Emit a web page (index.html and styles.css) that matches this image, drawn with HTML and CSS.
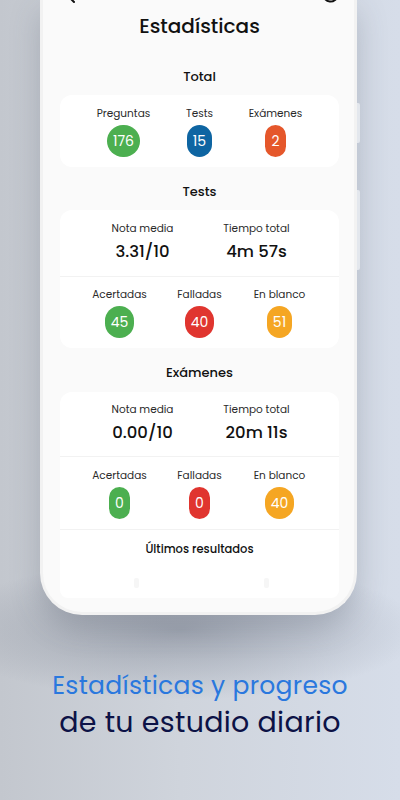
FILE: index.html
```html
<!DOCTYPE html>
<html lang="es">
<head>
  <meta charset="utf-8">
  <title>Estadísticas</title>
  <link rel="stylesheet" href="styles.css">
</head>
<body>
  <div class="stage">
    <div class="phone">
      <div class="side-btn side-btn-top"></div>
      <div class="side-btn side-btn-mid"></div>

      <div class="toolbar">
        <svg class="tool-icon" width="18" height="18" viewBox="0 0 18 18">
          <path d="M11 2 L4 9 L11 16" fill="none" stroke="#111" stroke-width="2" stroke-linecap="round"/>
        </svg>
        <svg class="tool-icon" width="18" height="18" viewBox="0 0 18 18">
          <path d="M15 4 A6.5 6.5 0 1 1 4 13" fill="none" stroke="#111" stroke-width="2" stroke-linecap="round"/>
        </svg>
      </div>

      <h1 class="title">Estadísticas</h1>

      <!-- Total -->
      <h2 class="section-title">Total</h2>
      <div class="card">
        <div class="row row-total">
          <div class="stat">
            <span class="stat-label">Preguntas</span>
            <span class="badge green">176</span>
          </div>
          <div class="stat">
            <span class="stat-label">Tests</span>
            <span class="badge blue">15</span>
          </div>
          <div class="stat">
            <span class="stat-label">Exámenes</span>
            <span class="badge orange">2</span>
          </div>
        </div>
      </div>

      <!-- Tests -->
      <h2 class="section-title">Tests</h2>
      <div class="card">
        <div class="row row-summary">
          <div class="stat">
            <span class="stat-label">Nota media</span>
            <span class="stat-value">3.31/10</span>
          </div>
          <div class="stat">
            <span class="stat-label">Tiempo total</span>
            <span class="stat-value">4m 57s</span>
          </div>
        </div>
        <div class="divider"></div>
        <div class="row row-answers">
          <div class="stat">
            <span class="stat-label">Acertadas</span>
            <span class="badge green">45</span>
          </div>
          <div class="stat">
            <span class="stat-label">Falladas</span>
            <span class="badge red">40</span>
          </div>
          <div class="stat">
            <span class="stat-label">En blanco</span>
            <span class="badge yellow">51</span>
          </div>
        </div>
      </div>

      <!-- Exámenes -->
      <h2 class="section-title section-title-exams">Exámenes</h2>
      <div class="card card-exams">
        <div class="row row-summary">
          <div class="stat">
            <span class="stat-label">Nota media</span>
            <span class="stat-value">0.00/10</span>
          </div>
          <div class="stat">
            <span class="stat-label">Tiempo total</span>
            <span class="stat-value">20m 11s</span>
          </div>
        </div>
        <div class="divider"></div>
        <div class="row row-answers">
          <div class="stat">
            <span class="stat-label">Acertadas</span>
            <span class="badge green">0</span>
          </div>
          <div class="stat">
            <span class="stat-label">Falladas</span>
            <span class="badge red">0</span>
          </div>
          <div class="stat">
            <span class="stat-label">En blanco</span>
            <span class="badge yellow">40</span>
          </div>
        </div>
        <div class="divider"></div>
        <div class="latest">Últimos resultados</div>
        <div class="chart-stubs">
          <span class="stub"></span>
          <span class="stub"></span>
        </div>
      </div>
    </div>

    <div class="caption">
      <p class="caption-blue">Estadísticas y progreso</p>
      <p class="caption-dark">de tu estudio diario</p>
    </div>
  </div>
</body>
</html>
```

FILE: styles.css
```css
/* Reset */
html, body {
  margin: 0;
  padding: 0;
}

body {
  width: 400px;
  height: 800px;
  overflow: hidden;
  font-family: "Poppins", Inter, "Open Sans", sans-serif;
  color: #111;
  background:
    radial-gradient(ellipse 240px 70px at 180px 630px, rgba(90, 98, 115, 0.4), rgba(90, 98, 115, 0) 100%),
    linear-gradient(90deg, #c3c7ce 0%, #cfd4dc 45%, #d6dde9 100%);
}

.stage {
  padding: 0 43px 0 40px;
}

/* Phone frame */
.phone {
  display: flow-root;
  position: relative;
  height: 612px;
  background-color: #fafafa;
  border: 3px solid #f2f2f2;
  border-top: none;
  border-radius: 0 0 42px 42px;
  padding: 0 15px 0 17px;
  box-shadow: 0 12px 30px rgba(70, 78, 95, 0.25);
}

.side-btn {
  position: absolute;
  right: -6px;
  width: 3px;
  background-color: #e3e7ed;
  border-radius: 0 2px 2px 0;
}

.side-btn-top {
  top: 103px;
  height: 40px;
}

.side-btn-mid {
  top: 190px;
  height: 80px;
}

.toolbar {
  display: flex;
  justify-content: space-between;
  margin-top: -14px;
  height: 18px;
  padding: 0 0 0 3px;
}

.title {
  margin: 7px 0 0;
  font-size: 20px;
  line-height: 30px;
  font-weight: 500;
  text-align: center;
}

.section-title {
  margin: 26px 0 8px;
  font-size: 13px;
  line-height: 20px;
  font-weight: 500;
  text-align: center;
}

.card + .section-title {
  margin-top: 15px;
}

.section-title-exams {
  margin-bottom: 9px;
}

/* Cards */
.card {
  background-color: #fff;
  border-radius: 12px;
}

.card-exams {
  height: 206px;
  border-radius: 12px 12px 8px 8px;
}

.row {
  display: grid;
  justify-content: center;
}

.row-total {
  grid-template-columns: repeat(3, 76px);
  padding: 12px 0 10px;
}

.row-summary {
  grid-template-columns: repeat(2, 114px);
  padding: 12px 0 12px;
}

.card-exams .row-summary {
  padding: 11px 0 11px;
}

.row-answers {
  grid-template-columns: repeat(3, 80px);
  padding: 11px 0 10px;
}

.card-exams .row-answers {
  padding-top: 12px;
}

.stat {
  display: flex;
  flex-direction: column;
  align-items: center;
  gap: 4px;
}

.stat-label {
  font-size: 10.5px;
  line-height: 14px;
  color: #2a2a2a;
  white-space: nowrap;
}

.stat-value {
  font-size: 16.5px;
  line-height: 24px;
  font-weight: 500;
  color: #111;
  white-space: nowrap;
}

.badge {
  display: flex;
  align-items: center;
  justify-content: center;
  height: 32px;
  min-width: 9px;
  padding: 0 6px;
  border-radius: 16px;
  font-size: 14px;
  color: #fff;
}

.green { background-color: #4caf50; }
.blue { background-color: #0e65a2; }
.orange { background-color: #e5572b; }
.red { background-color: #e0352f; }
.yellow { background-color: #f5a623; }

.divider {
  height: 1px;
  background-color: #f2f2f2;
}

.latest {
  padding-top: 10px;
  font-size: 11.5px;
  line-height: 18px;
  font-weight: 500;
  text-align: center;
}

.chart-stubs {
  display: flex;
  justify-content: space-between;
  padding: 20px 70px 0 74px;
}

.stub {
  width: 5px;
  height: 10px;
  background-color: #f6f6f6;
  border-radius: 2px;
}

/* Caption */
.caption {
  padding-top: 53px;
  margin-right: -43px;
  margin-left: -40px;
  text-align: center;
}

.caption p {
  margin: 0;
  line-height: 36px;
  letter-spacing: 0.3px;
}

.caption-blue {
  font-size: 25px;
  color: #2a78de;
}

.caption-dark {
  font-size: 28.5px;
  color: #0c1246;
}
```
